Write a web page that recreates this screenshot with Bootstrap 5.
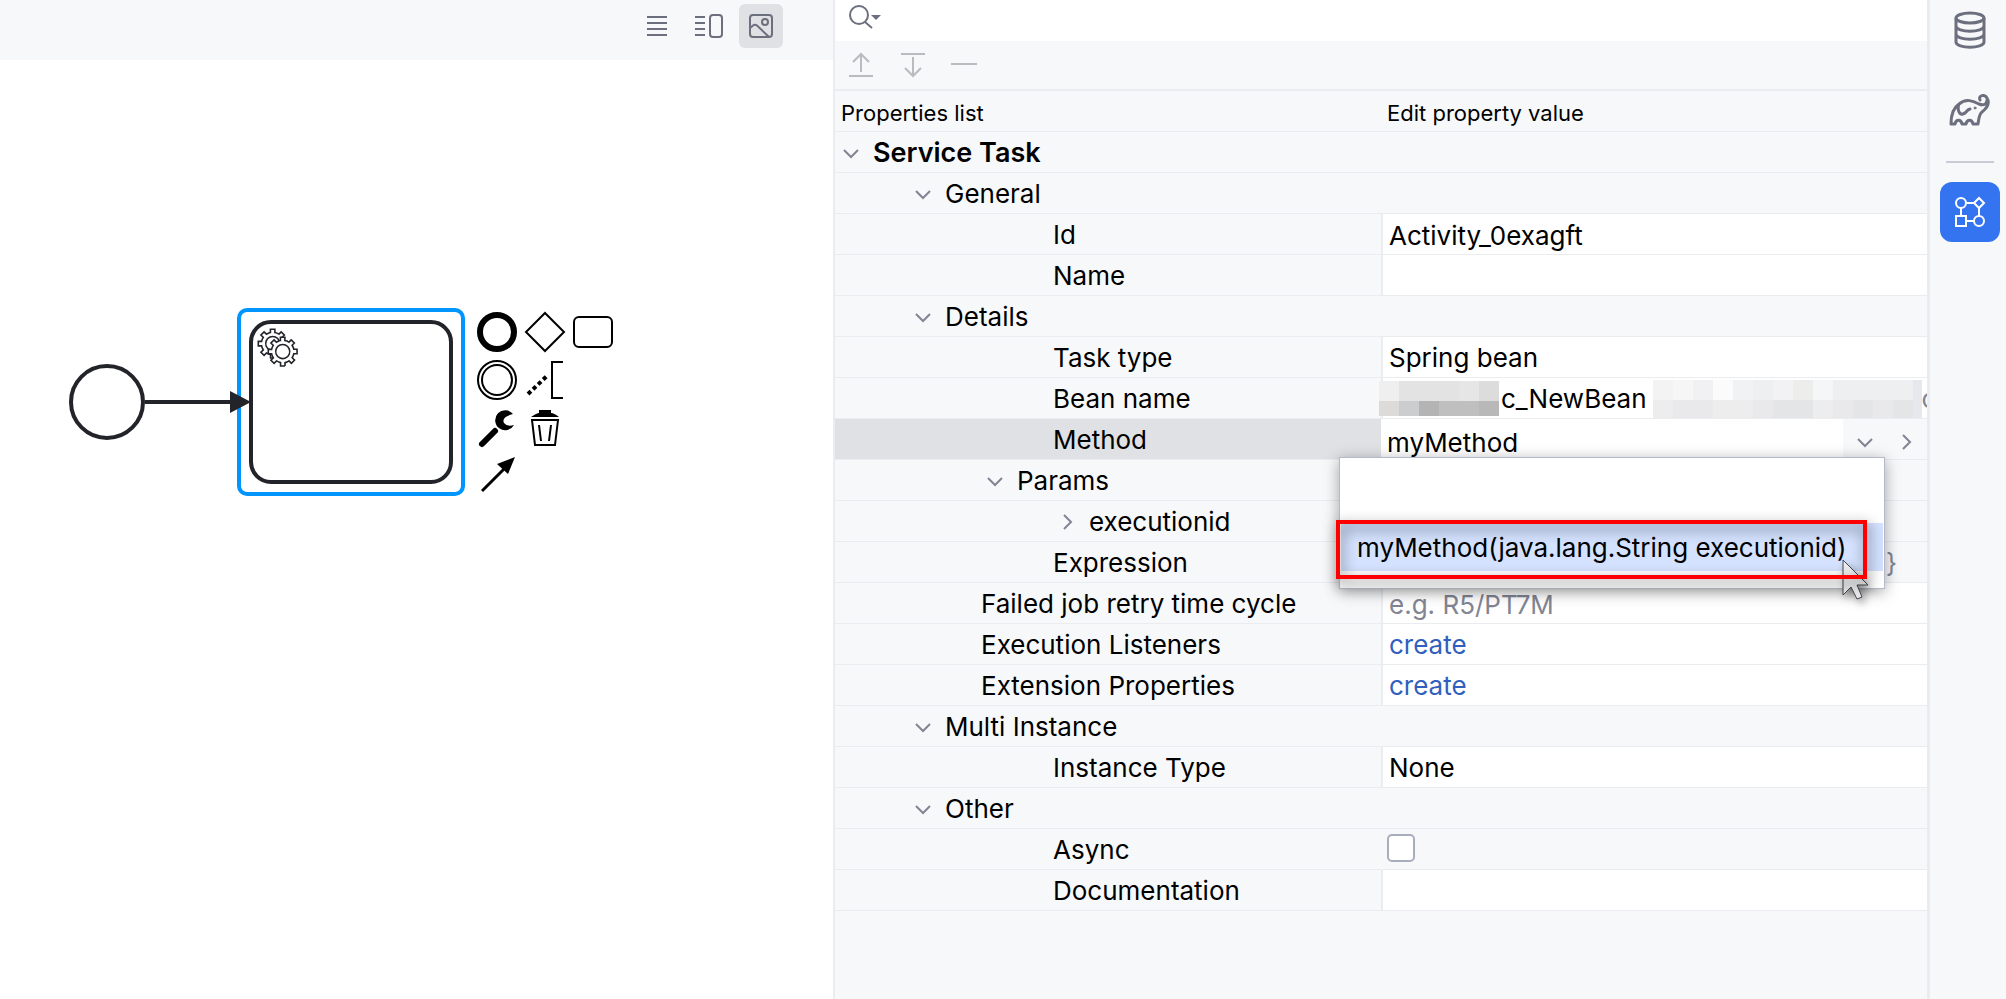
<!DOCTYPE html>
<html lang="en">
<head>
<meta charset="utf-8">
<meta name="viewport" content="width=device-width, initial-scale=1">
<title>BPMN editor</title>
<link href="https://cdn.jsdelivr.net/npm/bootstrap@5.3.0/dist/css/bootstrap.min.css" rel="stylesheet">
<script src="https://cdn.jsdelivr.net/npm/bootstrap@5.3.0/dist/js/bootstrap.bundle.min.js"></script>
<style>
  :root { --chrome: #f7f8fa; --line: #ebecf0; --icon: #6c707e; --mark: #818594; --accent: #3574f0; }
  body { font-family: Inter, "Liberation Sans", sans-serif; font-size: 26px; line-height: 32px; color: #000; background: var(--chrome); }
  svg { display: block; fill: none; }
  button, input, select { color: inherit; font: inherit; }
  .plain { border: 0; padding: 0; background: transparent; }
  .editor-pane { flex: 833 1 0; min-width: 0; }
  .props-pane { flex: 1092 1 0; min-width: 0; border-left: 2px solid var(--line); }
  .view-bar { height: 60px; padding: 4px 50px 12px 0; background: var(--chrome); }
  .view-btn { width: 44px; height: 44px; border-radius: 6px; }
  .view-btn.active { background: #dfe1e5; }
  .view-btn svg, .tool-btn svg { stroke: var(--icon); stroke-width: 2; }
  .diagram, .context-pad { position: absolute; }
  .diagram { left: 60px; top: 240px; }
  .context-pad { left: 473px; top: 248px; display: grid; grid-template-columns: repeat(3, 48px); grid-auto-rows: 48px; }
  .context-pad svg { stroke: #000; stroke-width: 2; }
  .search-bar { height: 41px; background: #fff; }
  .search-bar button { padding-left: 14px; }
  .tool-bar { height: 50px; padding: 0 14px; gap: 26px; border-bottom: 2px solid var(--line); }
  .tool-btn svg { stroke: #b9bbbf; }
  .props { table-layout: fixed; border-collapse: separate; border-spacing: 0; }
  .props th, .props td { height: 41px; padding: 2px 0 0; font-weight: 400; border-bottom: 1px solid var(--line); }
  .props thead th { padding: 4px 6px 0; font-size: 22px; }
  .props tr > th + td { border-left: 2px solid var(--line); background: #fff; }
  .props tr > th + td.bare { border-left-color: transparent; background: transparent; }
  .props tr.picked th { background: #dfe1e5; }
  .props tr.picked th + td { border-left: 0; padding: 0; }
  .props th.leaf-3 { padding-left: 146px; }
  .props th.leaf-5 { padding-left: 218px; }
  .node { display: flex; align-items: center; gap: 14px; }
  .node.root { font-size: 27px; font-weight: 600; }
  .node svg, .combo svg { stroke: var(--mark); stroke-width: 2; }
  .in-0 { padding-left: 8px; } .in-2 { padding-left: 80px; } .in-4 { padding-left: 152px; } .in-6 { padding-left: 224px; }
  .field { display: block; width: 100%; height: 38px; padding: 0 6px; border: 0; background: transparent; appearance: none; outline: 0; }
  .field::placeholder { color: var(--mark); opacity: 1; }
  .create { padding-left: 6px; color: #315fbd; text-decoration: none; }
  .check { display: block; width: 28px; height: 28px; margin: 0 0 4px 4px; appearance: none; border: 2px solid #a8adbd; border-radius: 5px; background: #fff; }
  .brace { padding-right: 30px; color: var(--mark); }
  .combo { height: 40px; }
  .combo .field { flex: 1; min-width: 0; height: 40px; padding-top: 7px; }
  .combo .arrows { width: 84px; padding: 6px 11px 0 14px; background: var(--chrome); }
  .bean { height: 38px; }
  .bean-name { padding: 0 6px 0 2px; }
  .mosaic { flex: none; }
  .mosaic.first { position: relative; margin-left: -4px; }
  .bean .rest { flex: 1; min-width: 0; overflow: hidden; color: var(--mark); }
  .choices { position: absolute; left: -42px; top: 38px; width: 546px; height: 132px; padding: 1px; z-index: 2; background: #fff; border: 1px solid #b5b9c9; box-shadow: 0 3px 14px rgba(0,0,0,.35); }
  .choices button { display: block; width: 100%; height: 48px; padding: 2px 16px 0; text-align: left; white-space: nowrap; }
  .choices button.blank { height: 64px; }
  .choices button.active { background: #d4e2ff; }
  .callout { position: absolute; left: -45px; top: 101px; width: 531px; height: 59px; z-index: 3; border: 4px solid #f00; filter: drop-shadow(2px 5px 7px rgba(0,0,0,.6)); pointer-events: none; }
  .pointer { position: absolute; left: 461px; top: 140px; z-index: 2; filter: drop-shadow(3px 4px 4px rgba(0,0,0,.4)); }
  .side-bar { width: 79px; padding: 0 6px 0 10px; border-left: 3px solid var(--line); }
  .side-btn { width: 60px; height: 60px; border-radius: 12px; }
  .side-btn svg { stroke: var(--icon); stroke-width: 3; }
  .side-btn.active { background: var(--accent); }
  .side-btn.active svg { stroke: #fff; stroke-width: 2; }
  .side-gap { height: 21px; }
  .side-rule { width: 48px; height: 2px; margin: 20px 0 19px; background: #c9ccd6; }
</style>
</head>
<body>
<svg width="0" height="0" class="position-absolute" aria-hidden="true">
  <defs>
    <path id="down" d="M1 5 8 12 15 5"/>
    <path id="right" d="M5 1 12 8 5 15"/>
    <path id="gear" d="m 0,0 v -1.71335 c 0.352326,-0.0705 0.703932,-0.17838 1.047628,-0.32133 0.344416,-0.14465 0.665822,-0.32133 0.966377,-0.52145 l 1.19431,1.18005 1.567487,-1.57688 -1.195028,-1.18014 c 0.403376,-0.61394 0.683079,-1.29908 0.825447,-2.01824 l 1.622133,-0.01 v -2.2196 l -1.636514,0.01 c -0.07333,-0.35153 -0.178319,-0.70024 -0.323564,-1.04372 -0.145244,-0.34406 -0.321407,-0.6644 -0.522735,-0.96217 l 1.131035,-1.13631 -1.583305,-1.56293 -1.129598,1.13589 c -0.614052,-0.40108 -1.302883,-0.68093 -2.022633,-0.82247 l 0.0093,-1.61852 h -2.241173 l 0.0042,1.63124 c -0.353763,0.0736 -0.705369,0.17977 -1.049785,0.32371 -0.344415,0.14437 -0.665102,0.32092 -0.9635006,0.52006 l -1.1698628,-1.15823 -1.5667691,1.5792 1.1684265,1.15669 c -0.4026573,0.61283 -0.68308,1.29797 -0.8247287,2.01713 l -1.6588041,0.003 v 2.22174 l 1.6724648,-0.006 c 0.073327,0.35077 0.1797598,0.70243 0.3242851,1.04472 0.1452428,0.34448 0.3214064,0.6644 0.5227339,0.96066 l -1.1993431,1.19723 1.5840256,1.56011 1.1964668,-1.19348 c 0.6140517,0.40346 1.3028827,0.68232 2.0233517,0.82331 l 7.19e-4,1.69892 h 2.226848 z m 0.221462,-3.9957 c -1.788948,0.7502 -3.8576,-0.0928 -4.6097055,-1.87438 -0.7521065,-1.78321 0.090598,-3.84627 1.8802645,-4.59604 1.78823,-0.74936 3.856881,0.0929 4.608987,1.87437 0.752106,1.78165 -0.0906,3.84612 -1.879546,4.59605 z"/>
  </defs>
</svg>
<div class="d-flex min-vh-100">
  <main class="editor-pane d-flex flex-column bg-white">
    <div class="view-bar d-flex justify-content-end gap-2">
      <button class="view-btn plain d-flex align-items-center justify-content-center" aria-label="Text"><svg width="24" height="24"><path d="M2 3H22M2 9H22M2 15H22M2 21H22"/></svg></button>
      <button class="view-btn plain d-flex align-items-center justify-content-center" aria-label="Text and diagram"><svg width="28" height="24"><path d="M0 3H10M0 9H10M0 15H10M0 21H10"/><rect x="15" y="1" width="12" height="22" rx="3"/></svg></button>
      <button class="view-btn plain active d-flex align-items-center justify-content-center" aria-label="Diagram"><svg width="24" height="24"><rect x="1" y="1" width="22" height="22" rx="3"/><circle cx="16" cy="8" r="3"/><path d="M1 14 4 11.500Q6 10 8 11.500L20 23"/></svg></button>
    </div>
    <div class="flex-grow-1 position-relative">
      <svg class="diagram" width="420" height="210" viewBox="60 300 420 210" stroke="#22242a" stroke-width="4">
        <rect x="239" y="310" width="224" height="184" rx="8" stroke="#0095ff"/>
        <circle cx="107" cy="402" r="36"/>
        <path d="M145 402H234"/>
        <path d="M230 391 251 402 230 413Z" fill="#22242a" stroke="none"/>
        <rect x="251" y="322" width="200" height="160" rx="20"/>
        <g transform="translate(251 322) scale(2)" stroke-width=".8" fill="#fff">
          <use href="#gear" x="12" y="18"/>
          <circle cx="15.800" cy="15.500" r="4.500" stroke="none"/>
          <use href="#gear" x="17" y="22"/>
        </g>
      </svg>
      <div class="context-pad">
        <button class="plain" aria-label="Append end event"><svg width="48" height="48"><circle cx="24" cy="24" r="17" stroke-width="6"/></svg></button>
        <button class="plain" aria-label="Append gateway"><svg width="48" height="48"><path d="M24 5 43 24 24 43 5 24Z"/></svg></button>
        <button class="plain" aria-label="Append task"><svg width="48" height="48"><rect x="5" y="9" width="38" height="30" rx="5"/></svg></button>
        <button class="plain" aria-label="Append intermediate event"><svg width="48" height="48"><circle cx="24" cy="24" r="19"/><circle cx="24" cy="24" r="15"/></svg></button>
        <button class="plain" aria-label="Add annotation"><svg width="48" height="48"><path d="M42 6H31V42H42"/><path d="M7 38 27 19" stroke-width="4" stroke-dasharray="4 3"/></svg></button><span></span>
        <button class="plain" aria-label="Change type"><svg width="48" height="48"><path d="M9 40 22 27" stroke-width="6" stroke-linecap="round"/><path d="M40 10A10 10 0 1 0 41 21Q34 23 31 19 28 13 40 10Z" fill="#000" stroke="none"/></svg></button>
        <button class="plain" aria-label="Delete"><svg width="48" height="48"><path d="M10 13Q16 9 18 9V6H30V9Q33 9 38 13Z" fill="#000" stroke="none"/><path d="M11 16H37L34 41H14ZM18 21 20 37M30 21 28 37"/></svg></button><span></span>
        <button class="plain" aria-label="Connect"><svg width="48" height="48"><path d="M9 39 34 14" stroke-width="3"/><path d="M42 5 35 22 24 12Z" fill="#000" stroke="none"/></svg></button>
      </div>
    </div>
  </main>

  <section class="props-pane">
    <div class="search-bar d-flex align-items-start"><button class="plain" aria-label="Search"><svg width="34" height="32" viewBox="0 -2 34 32" stroke="#6c707e" stroke-width="2"><circle cx="10" cy="13" r="9"/><path d="M16 20 23 26"/><path d="M22 13H32L27 18Z" fill="#6c707e" stroke="none"/></svg></button></div>
    <div class="tool-bar d-flex align-items-center">
      <button class="tool-btn plain" aria-label="Expand"><svg width="26" height="26"><path d="M0 24H24M12 20V2M4 10 12 2 20 10"/></svg></button>
      <button class="tool-btn plain" aria-label="Collapse"><svg width="26" height="26"><path d="M0 2H24M12 5V24M4 16 12 24 20 16"/></svg></button>
      <button class="tool-btn plain" aria-label="Remove"><svg width="24" height="26" viewBox="2 0 24 26" overflow="visible"><path d="M0 12H26"/></svg></button>
    </div>
    <table class="props w-100">
      <thead><tr><th scope="col">Properties list</th><th scope="col">Edit property value</th></tr></thead>
      <tbody>
        <tr><th colspan="2"><div class="node root in-0"><button class="plain" aria-label="Collapse Service Task"><svg width="16" height="16"><use href="#down"/></svg></button>Service Task</div></th></tr>
        <tr><th colspan="2"><div class="node in-2"><button class="plain" aria-label="Collapse General"><svg width="16" height="16"><use href="#down"/></svg></button>General</div></th></tr>
        <tr><th class="leaf-5"><label for="f-id">Id</label></th><td><input id="f-id" class="field" value="Activity_0exagft"></td></tr>
        <tr><th class="leaf-5"><label for="f-name">Name</label></th><td><input id="f-name" class="field"></td></tr>
        <tr><th colspan="2"><div class="node in-2"><button class="plain" aria-label="Collapse Details"><svg width="16" height="16"><use href="#down"/></svg></button>Details</div></th></tr>
        <tr><th class="leaf-5"><label for="f-type">Task type</label></th><td><select id="f-type" class="field"><option>Spring bean</option></select></td></tr>
        <tr><th class="leaf-5">Bean name</th><td><div class="bean d-flex align-items-center">
          <svg class="mosaic first" width="120" height="36" shape-rendering="crispEdges"><path fill="#efefef" d="M0 0h20v20H0z"/><path fill="#e3e3e3" d="M20 0h80v20H20z"/><path fill="#e6e6e6" d="M80 0h20v20H80z"/><path fill="#dcdcdc" d="M100 0h20v20h-20z"/><path fill="#dcdbd9" d="M0 20h20v15H0z"/><path fill="#cccdcf" d="M20 20h20v15H20z"/><path fill="#b4b4b4" d="M40 20h20v15H40z"/><path fill="#bfbfbf" d="M60 20h40v15H60z"/><path fill="#b8b8b8" d="M100 20h20v15h-20z"/></svg>
          <span class="bean-name">c_NewBean</span>
          <svg class="mosaic" width="269" height="38" shape-rendering="crispEdges"><path fill="#eeeff1" d="M0 0h269v20H0z"/><path fill="#f3f3f3" d="M0 0h20v20H0z"/><path fill="#f6f6f6" d="M20 0h20v20H20z"/><path fill="#f1f1f3" d="M40 0h20v20H40z"/><path fill="#fbfbfb" d="M60 0h20v20H60z"/><path fill="#f0f2f4" d="M80 0h20v20H80z"/><path fill="#f2f2f4" d="M120 0h20v20h-20z"/><path fill="#ededec" d="M140 0h20v20h-20z"/><path fill="#f4f6f8" d="M160 0h20v20h-20z"/><path fill="#e6e8ed" d="M260 0h9v38h-9z"/><path fill="#e9e9eb" d="M0 20h260v18H0z"/><path fill="#ededee" d="M0 20h20v18H0zM60 20h40v18H60zM160 20h20v18h-20z"/><path fill="#e4e5e7" d="M120 20h40v18h-40zM200 20h20v18h-20zM240 20h20v18h-20z"/></svg>
          <span class="rest">c</span></div></td></tr>
        <tr class="picked"><th class="leaf-5"><label for="f-method">Method</label></th><td class="position-relative">
          <div class="combo d-flex"><input id="f-method" class="field" value="myMethod">
            <div class="arrows d-flex justify-content-between align-items-center"><button class="plain" aria-label="Show methods"><svg width="18" height="16"><use href="#down"/></svg></button><button class="plain" aria-label="Go to method"><svg width="18" height="16"><use href="#right"/></svg></button></div></div>
          <div class="choices"><button class="plain blank" aria-label="No method"></button><button class="plain active">myMethod(java.lang.String executionid)</button></div>
          <svg class="pointer" width="30" height="42"><path d="M1 1V36L9 28 15 40 20 38 15 26H26Z" fill="#ececec" stroke="#44464f" stroke-width="1"/></svg>
          <div class="callout"></div></td></tr>
        <tr><th colspan="2"><div class="node in-4"><button class="plain" aria-label="Collapse Params"><svg width="16" height="16"><use href="#down"/></svg></button>Params</div></th></tr>
        <tr><th colspan="2"><div class="node in-6"><button class="plain" aria-label="Expand executionid"><svg width="16" height="16"><use href="#right"/></svg></button>executionid</div></th></tr>
        <tr><th class="leaf-5">Expression</th><td class="bare text-end"><span class="brace">}</span></td></tr>
        <tr><th class="leaf-3"><label for="f-retry">Failed job retry time cycle</label></th><td><input id="f-retry" class="field" placeholder="e.g. R5/PT7M"></td></tr>
        <tr><th class="leaf-3">Execution Listeners</th><td><a class="create" href="#">create</a></td></tr>
        <tr><th class="leaf-3">Extension Properties</th><td><a class="create" href="#">create</a></td></tr>
        <tr><th colspan="2"><div class="node in-2"><button class="plain" aria-label="Collapse Multi Instance"><svg width="16" height="16"><use href="#down"/></svg></button>Multi Instance</div></th></tr>
        <tr><th class="leaf-5"><label for="f-inst">Instance Type</label></th><td><select id="f-inst" class="field"><option>None</option></select></td></tr>
        <tr><th colspan="2"><div class="node in-2"><button class="plain" aria-label="Collapse Other"><svg width="16" height="16"><use href="#down"/></svg></button>Other</div></th></tr>
        <tr><th class="leaf-5"><label for="f-async">Async</label></th><td class="bare"><input id="f-async" class="check" type="checkbox"></td></tr>
        <tr><th class="leaf-5"><label for="f-doc">Documentation</label></th><td><input id="f-doc" class="field"></td></tr>
      </tbody>
    </table>
  </section>

  <nav class="side-bar d-flex flex-column align-items-center flex-shrink-0" aria-label="Tool windows">
    <button class="side-btn plain d-flex align-items-center justify-content-center" aria-label="Database"><svg width="34" height="38"><ellipse cx="17" cy="7" rx="14" ry="5"/><path d="M3 7V31C3 38 31 38 31 31V7M3 15C3 22 31 22 31 15M3 23C3 30 31 30 31 23"/></svg></button>
    <div class="side-gap"></div>
    <button class="side-btn plain d-flex align-items-center justify-content-center" aria-label="Gradle"><svg width="42" height="34" stroke-linejoin="round" stroke-linecap="round"><path d="M31 6C29 1 36 0 38 4 41 9 38 14 33 18 30 20 30 24 29 30H24C23 25 18 25 17 30H13C12 25 7 25 6 30H2C2 21 4 14 10 10 17 4 24 7 30 10 35 12 38 10 38 6M10 10C8 15 10 21 14 20 18 19 17 16 21 15"/><circle cx="26" cy="14" r="1" fill="#6c707e" stroke-width="1"/></svg></button>
    <div class="side-rule"></div>
    <button class="side-btn plain active d-flex align-items-center justify-content-center" aria-label="BPMN properties"><svg width="34" height="34"><circle cx="8" cy="8" r="5"/><path d="M26 3 31 8 26 13 21 8ZM3 21H13V31H3ZM13 8H21M8 13V21M26 13V21M13 26H21"/><circle cx="26" cy="26" r="5"/></svg></button>
  </nav>
</div>
</body>
</html>
